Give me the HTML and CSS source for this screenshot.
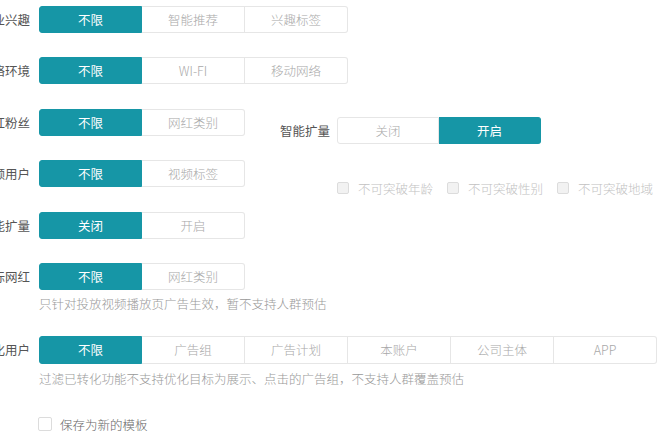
FILE: index.html
```html
<!DOCTYPE html>
<html lang="zh-CN">
<head>
    <meta charset="UTF-8">
    <meta name="viewport" content="width=device-width, initial-scale=1.0">
    <title>定向设置</title>
    <link rel="stylesheet" href="styles.css">
</head>
<body>
    <form class="form">
        <div class="row">
            <label class="label">行业兴趣</label>
            <div class="seg">
                <span class="seg-item active">不限</span>
                <span class="seg-item">智能推荐</span>
                <span class="seg-item">兴趣标签</span>
            </div>
        </div>
        <div class="row">
            <label class="label">网络环境</label>
            <div class="seg">
                <span class="seg-item active">不限</span>
                <span class="seg-item">WI-FI</span>
                <span class="seg-item">移动网络</span>
            </div>
        </div>
        <div class="split">
            <div class="split-left">
                <div class="row">
                    <label class="label">网红粉丝</label>
                    <div class="seg">
                        <span class="seg-item active">不限</span>
                        <span class="seg-item">网红类别</span>
                    </div>
                </div>
                <div class="row">
                    <label class="label">视频用户</label>
                    <div class="seg">
                        <span class="seg-item active">不限</span>
                        <span class="seg-item">视频标签</span>
                    </div>
                </div>
            </div>
            <div class="split-right">
                <div class="row-inline">
                    <label class="label-inline">智能扩量</label>
                    <div class="seg">
                        <span class="seg-item">关闭</span>
                        <span class="seg-item active">开启</span>
                    </div>
                </div>
                <div class="checks">
                    <label class="check disabled"><span class="box"></span>不可突破年龄</label>
                    <label class="check disabled"><span class="box"></span>不可突破性别</label>
                    <label class="check disabled"><span class="box"></span>不可突破地域</label>
                </div>
            </div>
        </div>
        <div class="row">
            <label class="label">智能扩量</label>
            <div class="seg">
                <span class="seg-item active">关闭</span>
                <span class="seg-item">开启</span>
            </div>
        </div>
        <div class="row with-tip">
            <label class="label">目标网红</label>
            <div class="seg">
                <span class="seg-item active">不限</span>
                <span class="seg-item">网红类别</span>
            </div>
        </div>
        <p class="tip">只针对投放视频播放页广告生效，暂不支持人群预估</p>
        <div class="row with-tip tall">
            <label class="label">转化用户</label>
            <div class="seg">
                <span class="seg-item active">不限</span>
                <span class="seg-item">广告组</span>
                <span class="seg-item">广告计划</span>
                <span class="seg-item">本账户</span>
                <span class="seg-item">公司主体</span>
                <span class="seg-item">APP</span>
            </div>
        </div>
        <p class="tip last">过滤已转化功能不支持优化目标为展示、点击的广告组，不支持人群覆盖预估</p>
        <label class="check save"><span class="box"></span>保存为新的模板</label>
    </form>
</body>
</html>
```

FILE: styles.css
```css
body {
    margin: 0;
    background-color: #fff;
    font-family: "Noto Sans CJK SC", "Noto Sans", sans-serif;
    font-size: 12.5px;
    color: #555;
    overflow: hidden;
}
.form {
    margin: 0 0 0 -40px;
    padding-top: 6px;
}
.row {
    display: flex;
    align-items: center;
    height: 27px;
    margin-bottom: 24.4px;
}
.row.with-tip {
    margin-bottom: 0;
}
.label {
    width: 70px;
    margin-right: 9px;
    text-align: right;
    white-space: nowrap;
}
.seg {
    display: flex;
}
.seg-item {
    width: 103px;
    height: 27px;
    box-sizing: border-box;
    border: 1px solid #e6e6e6;
    border-left: none;
    color: #a8a8a8;
    font-weight: 300;
    text-align: center;
    line-height: 25px;
}
.row.tall,
.row.tall .seg-item {
    height: 28px;
    line-height: 26px;
}
.seg-item:first-child {
    border-left: 1px solid #e6e6e6;
    border-radius: 3px 0 0 3px;
}
.seg-item:last-child {
    border-radius: 0 3px 3px 0;
}
.seg-item.active {
    background-color: #1696a6;
    border-color: #1696a6;
    color: #fff;
    font-weight: 400;
}
.split {
    display: flex;
}
.split-left {
    width: 285px;
}
.split-right {
    margin-left: 35px;
    padding-top: 8px;
}
.row-inline {
    display: flex;
    align-items: center;
}
.label-inline {
    width: 50px;
    margin-right: 7px;
    white-space: nowrap;
}
.row-inline .seg-item {
    width: 102px;
}
.checks {
    display: flex;
    align-items: center;
    margin-top: 35px;
    padding-left: 57px;
}
.check {
    display: flex;
    align-items: center;
    white-space: nowrap;
}
.check .box {
    width: 12px;
    height: 12px;
    box-sizing: border-box;
    border: 1px solid #dcdcdc;
    border-radius: 2px;
    margin-right: 9px;
}
.check.disabled {
    color: #c2c2c2;
    font-weight: 300;
    margin-right: 14px;
}
.check.disabled .box {
    background-color: #f2f2f2;
}
.tip {
    margin: 7px 0 0 79px;
    color: #999;
    font-weight: 300;
    line-height: 14px;
}
.row + .tip {
    margin-bottom: 25px;
}
.tip.last {
    margin-top: 8px;
}
.check.save {
    margin: 29px 0 0 78px;
    color: #666;
    font-weight: 300;
}
.check.save .box {
    width: 14px;
    height: 14px;
    margin-right: 8px;
}
```
